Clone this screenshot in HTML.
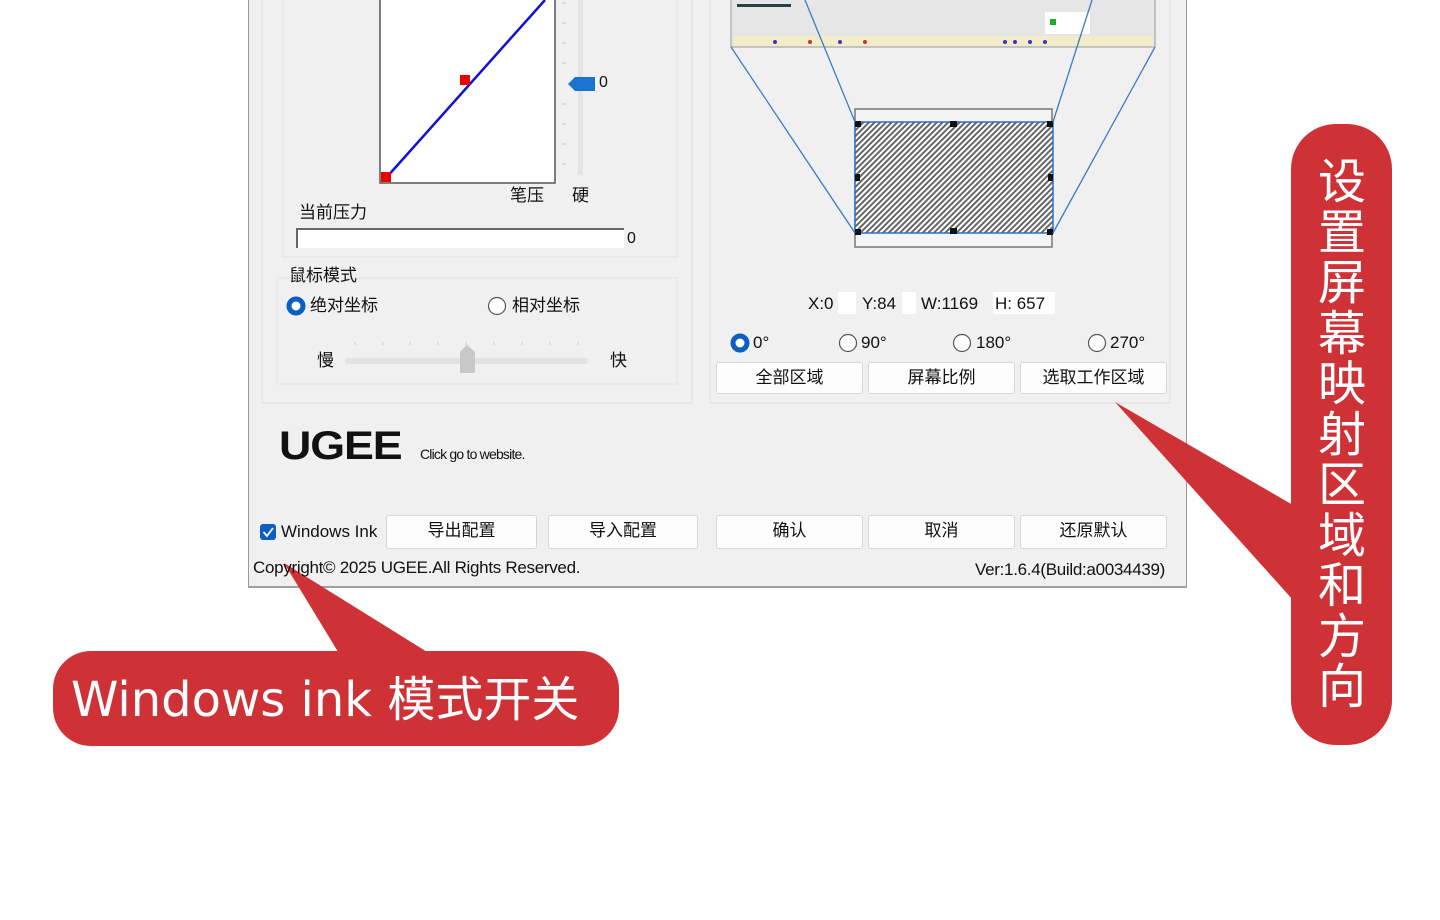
<!DOCTYPE html>
<html><head><meta charset="utf-8"><style>
body{margin:0;width:1440px;height:920px;background:#fff;overflow:hidden;position:relative;font-family:"Liberation Sans","Noto Sans CJK SC",sans-serif;}
.a{position:absolute;white-space:nowrap;font-size:17px;color:#111;line-height:1;}
.btn{position:absolute;height:32px;background:#fdfdfd;border:1px solid #d6d6d6;border-radius:3px;box-sizing:border-box;text-align:center;line-height:30px;font-size:17px;color:#111;font-family:"Liberation Sans","Noto Sans CJK SC",sans-serif;}
</style></head><body>
<div style="position:absolute;left:248px;top:0;width:939px;height:588px;background:#f0f0f0;border:1px solid #9a9a9a;border-top:none;box-sizing:border-box;border-bottom:2px solid #a0a0a0"></div>
<svg width="1440" height="920" style="position:absolute;left:0;top:0">
<defs><pattern id="h" width="4" height="4" patternUnits="userSpaceOnUse" patternTransform="rotate(45)"><rect width="4" height="4" fill="#fff"/><rect width="2" height="4" fill="#666"/></pattern></defs>
<rect x="262" y="-5" width="430" height="408" fill="none" stroke="#dcdcdc"/>
<rect x="283" y="-5" width="394" height="262" fill="none" stroke="#e2e2e2"/>
<rect x="277" y="278" width="400" height="106" fill="none" stroke="#e2e2e2"/>
<rect x="710" y="-5" width="460" height="408" fill="none" stroke="#dcdcdc"/>
<rect x="380" y="-2" width="175" height="185" fill="#fff" stroke="#555" stroke-width="1.5"/>
<line x1="386" y1="178" x2="545" y2="0" stroke="#1010d0" stroke-width="2.5"/>
<rect x="381" y="172" width="10" height="10" fill="#e00"/>
<rect x="460" y="75" width="10" height="10" fill="#e00"/>
<rect x="578" y="0" width="5" height="175" rx="2" fill="#e4e4e4"/>
<g stroke="#c8c8c8"><line x1="562" y1="3" x2="566" y2="3"/><line x1="562" y1="23" x2="566" y2="23"/><line x1="562" y1="43" x2="566" y2="43"/><line x1="562" y1="63" x2="566" y2="63"/><line x1="562" y1="104" x2="566" y2="104"/><line x1="562" y1="124" x2="566" y2="124"/><line x1="562" y1="144" x2="566" y2="144"/><line x1="562" y1="164" x2="566" y2="164"/></g>
<path d="M568 84 L575 77 L595 77 L595 91 L575 91 Z" fill="#1a73d0"/>
<rect x="297" y="229" width="327" height="19" fill="#fff"/>
<path d="M297 248 V229 H624" fill="none" stroke="#666" stroke-width="2"/>
<circle cx="296" cy="306" r="7" fill="#fff" stroke="#0a5fc0" stroke-width="5"/>
<circle cx="497" cy="306" r="8.5" fill="#fff" stroke="#555" stroke-width="1.2"/>
<rect x="345" y="358" width="243" height="6" rx="3" fill="#e2e2e2"/>
<g stroke="#ccc"><line x1="355" y1="342" x2="355" y2="345"/><line x1="383" y1="342" x2="383" y2="345"/><line x1="410" y1="342" x2="410" y2="345"/><line x1="438" y1="342" x2="438" y2="345"/><line x1="466" y1="342" x2="466" y2="345"/><line x1="494" y1="342" x2="494" y2="345"/><line x1="522" y1="342" x2="522" y2="345"/><line x1="550" y1="342" x2="550" y2="345"/><line x1="578" y1="342" x2="578" y2="345"/></g>
<path d="M460 352 L467 345 L475 352 V373 H460 Z" fill="#c8c8c8"/>
<rect x="731" y="-2" width="424" height="49" fill="#e6e6e6" stroke="#999"/>
<rect x="737" y="4" width="54" height="3" fill="#244"/>
<rect x="733" y="36" width="420" height="10" fill="#f2ecc8"/>
<rect x="1045" y="12" width="45" height="22" fill="#fff"/>
<rect x="1050" y="19" width="6" height="6" fill="#2a2"/>
<g fill="#33c"><circle cx="1005" cy="42" r="2"/><circle cx="1015" cy="42" r="2"/><circle cx="1030" cy="42" r="2"/><circle cx="1045" cy="42" r="2"/><circle cx="775" cy="42" r="2"/><circle cx="810" cy="42" r="2" fill="#c33"/><circle cx="840" cy="42" r="2"/><circle cx="865" cy="42" r="2" fill="#c33"/></g>
<rect x="855" y="109" width="197" height="138" fill="#f4f4f4" stroke="#777" stroke-width="1.5"/>
<rect x="855" y="122" width="198" height="111" fill="url(#h)" stroke="#2a70c8" stroke-width="1.5"/>
<g fill="#111"><rect x="855" y="121" width="6" height="6"/><rect x="950" y="121" width="7" height="6"/><rect x="1047" y="121" width="6" height="6"/><rect x="855" y="174" width="5" height="7"/><rect x="1048" y="174" width="5" height="7"/><rect x="855" y="229" width="6" height="6"/><rect x="950" y="228" width="7" height="6"/><rect x="1047" y="229" width="6" height="6"/></g>
<g stroke="#3a7cc4" stroke-width="1.3"><line x1="731" y1="47" x2="855" y2="233"/><line x1="1155" y1="47" x2="1053" y2="233"/><line x1="805" y1="0" x2="855" y2="122"/><line x1="1092" y1="0" x2="1053" y2="122"/></g>
<rect x="838" y="292" width="18" height="22" fill="#fff"/><rect x="902" y="292" width="14" height="22" fill="#fff"/><rect x="993" y="292" width="62" height="22" fill="#fff"/>
<circle cx="740" cy="343" r="7" fill="#fff" stroke="#0a5fc0" stroke-width="5"/>
<circle cx="848" cy="343" r="8.5" fill="#fff" stroke="#555" stroke-width="1.2"/>
<circle cx="962" cy="343" r="8.5" fill="#fff" stroke="#555" stroke-width="1.2"/>
<circle cx="1097" cy="343" r="8.5" fill="#fff" stroke="#555" stroke-width="1.2"/>
<rect x="260" y="524" width="16" height="16" rx="3" fill="#0a5fc0"/>
<path d="M263.5 532 L267 536 L273 528" fill="none" stroke="#fff" stroke-width="1.8"/>
<g fill="#cf3236">
<rect x="1291" y="124" width="101" height="621" rx="45"/>
<path d="M1115 402 L1293 505 L1293 600 Z"/>
<rect x="53" y="651" width="566" height="95" rx="38"/>
<path d="M284 563 L340 655 L432 655 Z"/>
</g>
</svg>
<div class="a" style="left:510px;top:187px">笔压</div>
<div class="a" style="left:572px;top:187px">硬</div>
<div class="a" style="left:599px;top:75px;font-size:16px">0</div>
<div class="a" style="left:299px;top:204px">当前压力</div>
<div class="a" style="left:627px;top:231px;font-size:16px">0</div>
<div class="a" style="left:289px;top:267px">鼠标模式</div>
<div class="a" style="left:310px;top:297px">绝对坐标</div>
<div class="a" style="left:512px;top:297px">相对坐标</div>
<div class="a" style="left:317px;top:352px">慢</div>
<div class="a" style="left:610px;top:352px">快</div>
<div class="a" style="left:808px;top:295px">X:0</div>
<div class="a" style="left:862px;top:295px">Y:84</div>
<div class="a" style="left:921px;top:295px">W:1169</div>
<div class="a" style="left:995px;top:295px">H: 657</div>
<div class="a" style="left:753px;top:334px">0°</div>
<div class="a" style="left:861px;top:334px">90°</div>
<div class="a" style="left:976px;top:334px">180°</div>
<div class="a" style="left:1110px;top:334px">270°</div>
<div class="btn" style="left:716px;top:362px;width:147px">全部区域</div>
<div class="btn" style="left:868px;top:362px;width:147px">屏幕比例</div>
<div class="btn" style="left:1020px;top:362px;width:147px">选取工作区域</div>
<div class="a" style="left:279px;top:426px;font-size:40px;font-weight:bold;letter-spacing:-1px;transform:scaleX(1.12);transform-origin:left">UGEE</div>
<div class="a" style="left:420px;top:447px;font-size:14px;letter-spacing:-0.8px">Click go to website.</div>
<div class="a" style="left:281px;top:523px;font-size:17px">Windows Ink</div>
<div class="btn" style="left:386px;top:515px;width:151px;height:34px">导出配置</div>
<div class="btn" style="left:548px;top:515px;width:150px;height:34px">导入配置</div>
<div class="btn" style="left:716px;top:515px;width:147px;height:34px">确认</div>
<div class="btn" style="left:868px;top:515px;width:147px;height:34px">取消</div>
<div class="btn" style="left:1020px;top:515px;width:147px;height:34px">还原默认</div>
<div class="a" style="left:253px;top:559px;font-size:17px;letter-spacing:-0.3px">Copyright© 2025 UGEE.All Rights Reserved.</div>
<div class="a" style="left:975px;top:561px;font-size:17px;letter-spacing:-0.3px">Ver:1.6.4(Build:a0034439)</div>
<div class="a" style="left:71px;top:676px;font-size:48px;color:#fff;font-family:'DejaVu Sans','Noto Sans CJK SC',sans-serif;">Windows ink 模式开关</div>
<div class="a" style="left:1317px;top:152px;width:50px;font-size:48px;line-height:50.5px;color:#fff;white-space:normal;text-align:center;font-family:'Noto Sans CJK SC',sans-serif">设置屏幕映射区域和方向</div>
</body></html>
